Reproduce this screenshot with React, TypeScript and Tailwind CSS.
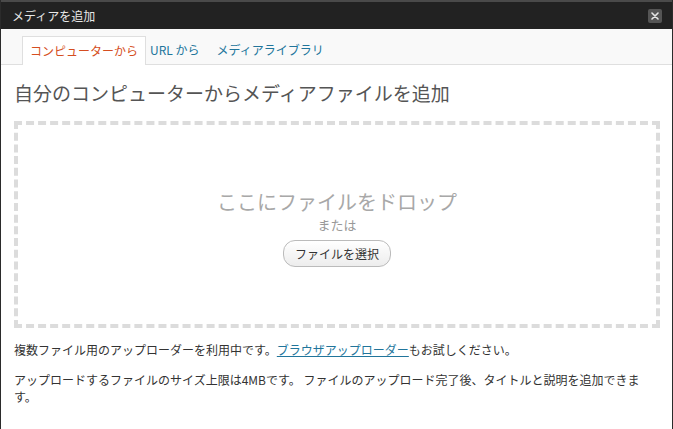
import React from "react";

export default function App() {
  const font = { fontFamily: '"Noto Sans CJK JP", "Noto Sans", sans-serif' };
  return (
    <div
      className="w-[673px] h-[429px] overflow-hidden bg-white border-x border-[#2b2b2b] flex flex-col"
      style={font}
    >
      {/* title bar */}
      <div className="h-[29px] shrink-0 bg-[#222222] border-t-2 border-[#4a4a4a] flex items-center justify-between pl-[11px] pr-[10px]">
        <span className="text-[12px] leading-none text-[#e8e8e8]">メディアを追加</span>
        <button className="w-[14px] h-[14px] rounded-[2px] bg-[#555555] flex items-center justify-center">
          <svg width="8" height="8" viewBox="0 0 8 8">
            <path d="M1 1L7 7M7 1L1 7" stroke="#e6e6e6" strokeWidth="1.6" strokeLinecap="round" />
          </svg>
        </button>
      </div>

      {/* tabs */}
      <div className="h-[36px] shrink-0 bg-[#f9f9f9] border-b border-[#dfdfdf] flex items-end pl-[21px] gap-[1px]">
        <div className="h-[29px] -mb-px px-[7px] bg-white border border-b-0 border-[#dfdfdf] flex items-center text-[12px] text-[#d54e21]">
          コンピューターから
        </div>
        <div className="h-[29px] pl-[3px] pr-[7px] flex items-center text-[12px] text-[#21759b]">URL から</div>
        <div className="h-[29px] pl-[9px] flex items-center text-[12px] text-[#21759b]">メディアライブラリ</div>
      </div>

      {/* body */}
      <div className="px-[13px] pt-[14px] flex flex-col">
        <h3 className="text-[19px] leading-[28px] text-[#555555] font-normal">
          自分のコンピューターからメディアファイルを追加
        </h3>

        <div className="mt-[14px] h-[207px] w-[646px] border-4 border-dashed border-[#dcdcdc] flex flex-col items-center pt-[63px]">
          <div className="text-[20px] leading-[28px] text-[#a8a8a8]">ここにファイルをドロップ</div>
          <div className="text-[13px] leading-[17px] text-[#999999]">または</div>
          <button className="mt-[7px] h-[27px] px-[11px] rounded-[12px] border border-[#bbbbbb] bg-gradient-to-b from-white to-[#ededed] text-[12px] text-[#333333] flex items-center">
            ファイルを選択
          </button>
        </div>

        <p className="mt-[13px] text-[12px] leading-[17px] text-[#333333]">
          複数ファイル用のアップローダーを利用中です。
          <a className="text-[#21759b] underline">ブラウザアップローダー</a>
          もお試しください。
        </p>
        <p className="mt-[13px] w-[646px] text-[12px] leading-[17px] text-[#333333]">
          アップロードするファイルのサイズ上限は4MBです。 ファイルのアップロード完了後、タイトルと説明を追加できます。
        </p>
      </div>
    </div>
  );
}
